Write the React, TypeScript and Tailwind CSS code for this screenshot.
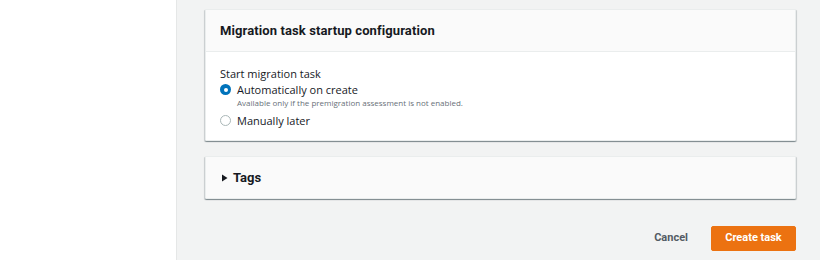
import React from "react";

const Radio = ({ checked }: { checked: boolean }) =>
  checked ? (
    <span className="mt-[1px] inline-flex h-[11px] w-[11px] shrink-0 items-center justify-center rounded-full bg-[#0073bb]">
      <span className="h-[4px] w-[4px] rounded-full bg-white" />
    </span>
  ) : (
    <span className="mt-[1px] inline-block h-[11px] w-[11px] shrink-0 rounded-full border border-[#aab7b8] bg-white" />
  );

const cardShadow =
  "shadow-[0_1px_1px_0_rgba(0,28,36,0.3),1px_1px_1px_0_rgba(0,28,36,0.15),-1px_1px_1px_0_rgba(0,28,36,0.15)]";

export default function App() {
  return (
    <div className="flex h-[260px] w-[820px] overflow-hidden bg-[#f2f3f3] font-['Open_Sans',sans-serif] text-[#16191f]">
      <div className="h-full w-[177px] shrink-0 border-r border-[#e5e7e7] bg-white" />
      <div className="flex w-[619px] flex-col pl-[28px] pt-[9px]">
        <div className={`rounded-[1px] border border-[#eaeded] bg-white ${cardShadow}`}>
          <div className="flex h-[42px] items-center border-b border-[#eaeded] bg-[#fafafa] px-[14px]">
            <h2 className="font-['Roboto',sans-serif] text-[13px] font-bold tracking-[0.1px]">
              Migration task startup configuration
            </h2>
          </div>
          <div className="px-[14px] pb-[12px] pt-[15px]">
            <div className="text-[11px] leading-[14px]">Start migration task</div>
            <div className="mt-[2px] flex gap-[6px]">
              <Radio checked />
              <div>
                <div className="text-[11px] leading-[14px]">Automatically on create</div>
                <div className="text-[8px] leading-[12px] text-[#687078]">
                  Available only if the premigration assessment is not enabled.
                </div>
              </div>
            </div>
            <div className="mt-[5px] flex gap-[6px]">
              <Radio checked={false} />
              <div className="text-[11px] leading-[14px]">Manually later</div>
            </div>
          </div>
        </div>
        <div className={`mt-[15px] flex h-[43px] items-center gap-[5px] rounded-[1px] border border-[#eaeded] bg-[#fafafa] px-[15px] ${cardShadow}`}>
          <svg width="7" height="8" viewBox="0 0 7 8">
            <path d="M1 0.5 L6.5 4 L1 7.5 Z" fill="#16191f" />
          </svg>
          <span className="font-['Roboto',sans-serif] text-[13px] font-bold">Tags</span>
        </div>
        <div className="mt-[27px] flex items-center justify-end gap-[23px] font-['Roboto',sans-serif]">
          <button className="text-[11px] font-bold text-[#545b64]">Cancel</button>
          <button className="h-[25px] w-[85px] rounded-[2px] border border-[#ec7211] bg-[#ec7211] text-[11px] font-bold text-white">
            Create task
          </button>
        </div>
      </div>
    </div>
  );
}
